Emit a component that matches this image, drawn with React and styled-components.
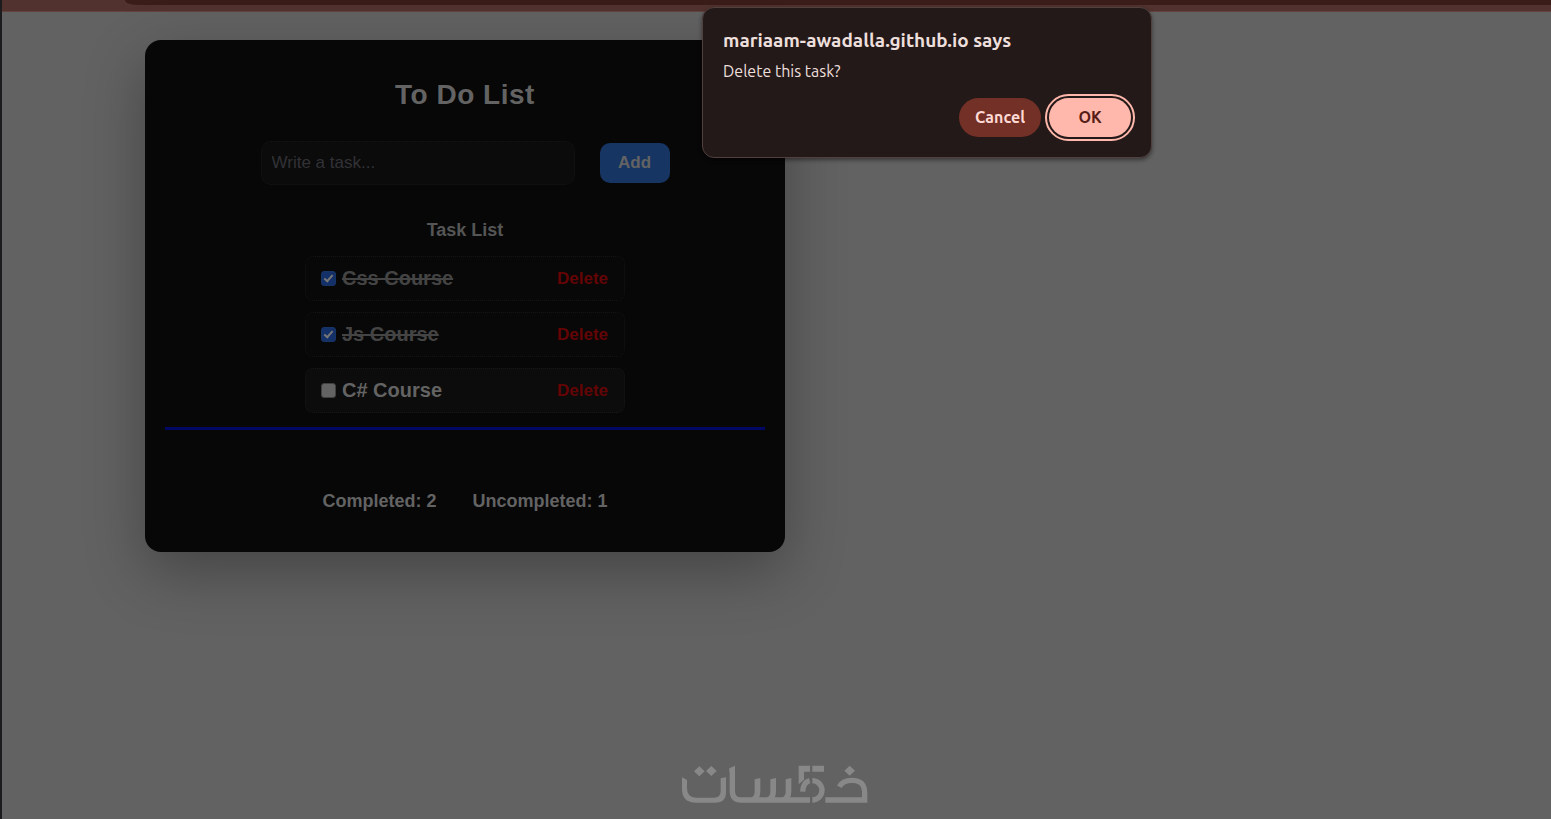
import React, { useState } from "react";
import styled, { createGlobalStyle } from "styled-components";

const Global = createGlobalStyle`
  *, *::before, *::after { box-sizing: border-box; }
  body {
    margin: 0;
    background: #626262;
    font-family: "Liberation Sans", Arial, sans-serif;
  }
`;

const Screen = styled.div`
  position: relative;
  display: flex;
  flex-direction: column;
  min-height: 100vh;
  border-left: 2px solid #1c1c1e;
  overflow: hidden;
`;

const BrowserBar = styled.div`
  height: 12px;
  padding-left: 123px;
  background: #52322e;
  border-bottom: 1px solid #61423e;
`;

const BarInset = styled.div`
  height: 5px;
  background: #3a1d19;
  border-bottom-left-radius: 12px 5px;
`;

const Main = styled.main`
  flex: 1;
  padding: 28px 143px 0;
`;

const Card = styled.section`
  display: flex;
  flex-direction: column;
  align-items: center;
  width: 100%;
  max-width: 640px;
  padding: 39px 20px 41px;
  border-radius: 16px;
  background: #070707;
  box-shadow: 0 20px 60px rgba(0, 0, 0, 0.3);
  color: #636363;
`;

const Title = styled.h1`
  margin: 0;
  font-size: 28px;
  line-height: 32px;
  letter-spacing: 0.5px;
`;

const Form = styled.form`
  display: flex;
  align-items: center;
  gap: 25px;
  margin-top: 30px;
`;

const TaskInput = styled.input`
  width: 314px;
  height: 44px;
  padding: 0 10px;
  border: 1px dotted #161616;
  border-radius: 10px;
  background: #0b0b0b;
  color: #636363;
  font: 17px "Liberation Sans", Arial, sans-serif;
  &::placeholder { color: #323236; opacity: 1; }
`;

const AddButton = styled.button`
  width: 70px;
  height: 40px;
  padding: 0;
  border: 0;
  border-radius: 10px;
  background: #173563;
  color: #636363;
  font: bold 17px "Liberation Sans", Arial, sans-serif;
`;

const ListTitle = styled.h2`
  margin: 35px 0 0;
  color: #555;
  font-size: 18px;
  line-height: 20px;
`;

const List = styled.ul`
  display: flex;
  flex-direction: column;
  gap: 11px;
  width: 320px;
  margin: 16px 0 0;
  padding: 0;
  list-style: none;
`;

const Row = styled.li`
  display: flex;
  align-items: center;
  justify-content: space-between;
  height: 45px;
  padding: 0 16px 0 15px;
  border: 1px dotted ${(p) => (p.$done ? "#141414" : "#171717")};
  border-radius: 8px;
  background: ${(p) => (p.$done ? "#080808" : "#0c0c0c")};
`;

const TaskLabel = styled.label`
  display: flex;
  align-items: center;
  gap: 6px;
  color: ${(p) => (p.$done ? "#444" : "#636363")};
  font-size: 20px;
  font-weight: bold;
  line-height: 22px;
`;

const TaskName = styled.span`
  padding-bottom: 1px;
  text-decoration: ${(p) => (p.$done ? "line-through" : "none")};
`;

const Tick = styled.input`
  appearance: none;
  display: grid;
  place-items: center;
  width: 15px;
  height: 15px;
  margin: 0;
  border: 1px solid #404040;
  border-radius: 3px;
  background: #636363;
  &:checked {
    border-color: #173563;
    background: #143068;
  }
  &:checked::after {
    content: "";
    width: 5px;
    height: 9px;
    margin-bottom: 2px;
    border: solid #777;
    border-width: 0 2px 2px 0;
    transform: rotate(42deg);
  }
`;

const DeleteButton = styled.button`
  padding: 0;
  border: 0;
  background: none;
  color: #640405;
  font: bold 17px "Liberation Sans", Arial, sans-serif;
`;

const Divider = styled.hr`
  width: 100%;
  height: 3px;
  margin: 14px 0 0;
  border: 0;
  background: #000863;
`;

const Totals = styled.div`
  display: flex;
  gap: 36px;
  margin-top: 61px;
  font-size: 18px;
  font-weight: bold;
  line-height: 20px;
`;

const Dialog = styled.div`
  position: absolute;
  top: 7px;
  left: 700px;
  width: 450px;
  padding: 20px;
  border: 1px solid #51403e;
  border-radius: 12px;
  background: #231918;
  box-shadow: 0 2px 4px rgba(0, 0, 0, 0.45);
  color: #eddfdc;
  font-family: Ubuntu, "Noto Sans", "Open Sans", sans-serif;
`;

const DialogTitle = styled.h2`
  margin: 0;
  font-size: 19px;
  font-weight: 600;
  line-height: 24px;
`;

const DialogText = styled.p`
  margin: 9px 0 0;
  font-size: 16px;
  line-height: 20px;
`;

const DialogActions = styled.div`
  display: flex;
  justify-content: flex-end;
  gap: 8px;
  margin-top: 17px;
`;

const DialogButton = styled.button`
  width: 82px;
  height: 39px;
  padding: 0 0 1px;
  border: 0;
  border-radius: 20px;
  background: ${(p) => (p.$primary ? "#ffb8ab" : "#733026")};
  color: ${(p) => (p.$primary ? "#561e17" : "#ffdad4")};
  outline: ${(p) => (p.$primary ? "2px solid #ffb8ab" : "none")};
  outline-offset: 2px;
  font: 600 16px Ubuntu, "Noto Sans", "Open Sans", sans-serif;
`;

const Footer = styled.footer`
  display: flex;
  justify-content: center;
  padding: 0 4px 15px 0;
`;

const Watermark = () => (
  <svg width="190" height="40" viewBox="30 25 570 120" role="img" aria-label="خمسات">
    <g fill="none" stroke="#888" strokeWidth="16">
      <path d="M187 38V106Q187 133 213 133H420" />
      <path d="M427 75A29 29 0 0 1 427 133" />
      <path d="M398 108Q399 80 419 75" />
      <path d="M466 133H584V112C584 76 560 74 545 74Q518 74 508 93" />
    </g>
    <path
      fill="#888"
      d="M36 65L51 73V98Q51 126 78 126H132Q152 126 152 106V68L168 65V110Q168 141 136 141H78Q36 141 36 100ZM178 38L195 30V48H178ZM254 71L271 67V108Q271 134 246 140L236 128Q254 126 254 108ZM301 71L318 67V108Q318 134 293 140L283 128Q301 126 301 108ZM347 71L364 67V108Q364 134 339 140L329 128Q347 126 347 108ZM386 30H420V48H402V72L386 86ZM427 30H462V48H427ZM88 32l16 15-16 15-16-15ZM124 31l16 15-16 15-16-15ZM539 30l16 15-16 15-16-15Z"
    />
  </svg>
);

const START = [
  { id: 1, name: "Css Course", done: true },
  { id: 2, name: "Js Course", done: true },
  { id: 3, name: "C# Course", done: false },
];

export default function App() {
  const [tasks, setTasks] = useState(START);
  const toggle = (id) =>
    setTasks(tasks.map((t) => (t.id === id ? { ...t, done: !t.done } : t)));
  const completed = tasks.filter((t) => t.done).length;

  return (
    <Screen>
      <Global />
      <BrowserBar>
        <BarInset />
      </BrowserBar>
      <Main>
        <Card>
          <Title>To Do List</Title>
          <Form onSubmit={(e) => e.preventDefault()}>
            <TaskInput type="text" aria-label="Task" placeholder="Write a task..." />
            <AddButton type="submit">Add</AddButton>
          </Form>
          <ListTitle>Task List</ListTitle>
          <List>
            {tasks.map((t) => (
              <Row key={t.id} $done={t.done}>
                <TaskLabel $done={t.done}>
                  <Tick type="checkbox" checked={t.done} onChange={() => toggle(t.id)} />
                  <TaskName $done={t.done}>{t.name}</TaskName>
                </TaskLabel>
                <DeleteButton type="button">Delete</DeleteButton>
              </Row>
            ))}
          </List>
          <Divider />
          <Totals>
            <span>Completed: {completed}</span>
            <span>Uncompleted: {tasks.length - completed}</span>
          </Totals>
        </Card>
      </Main>
      <Footer>
        <Watermark />
      </Footer>
      <Dialog role="alertdialog" aria-labelledby="dialog-title" aria-describedby="dialog-text">
        <DialogTitle id="dialog-title">mariaam-awadalla.github.io says</DialogTitle>
        <DialogText id="dialog-text">Delete this task?</DialogText>
        <DialogActions>
          <DialogButton type="button">Cancel</DialogButton>
          <DialogButton type="button" $primary>OK</DialogButton>
        </DialogActions>
      </Dialog>
    </Screen>
  );
}
